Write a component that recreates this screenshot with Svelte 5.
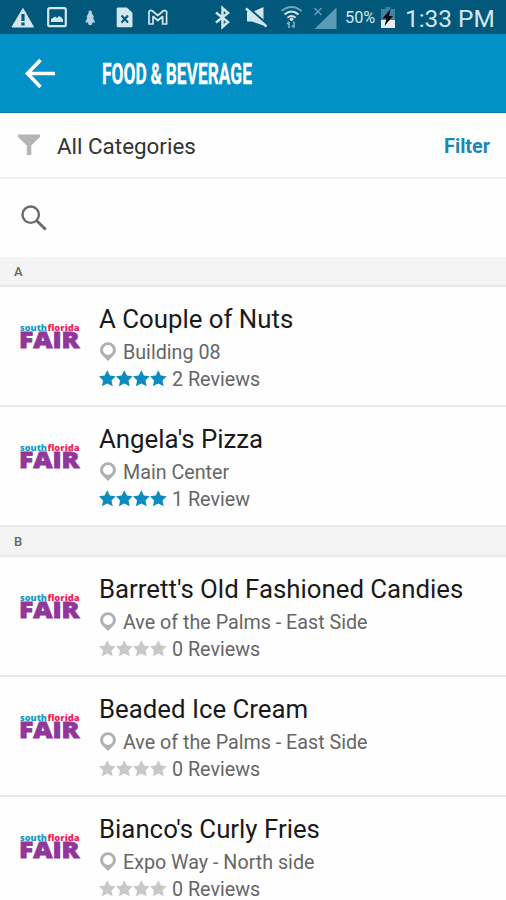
<script lang="ts">
	interface Vendor {
		name: string;
		location: string;
		stars: number;
		reviews: string;
	}

	interface Section {
		letter: string;
		vendors: Vendor[];
	}

	const sections: Section[] = [
		{
			letter: 'A',
			vendors: [
				{ name: 'A Couple of Nuts', location: 'Building 08', stars: 4, reviews: '2 Reviews' },
				{ name: "Angela's Pizza", location: 'Main Center', stars: 4, reviews: '1 Review' }
			]
		},
		{
			letter: 'B',
			vendors: [
				{
					name: "Barrett's Old Fashioned Candies",
					location: 'Ave of the Palms - East Side',
					stars: 0,
					reviews: '0 Reviews'
				},
				{
					name: 'Beaded Ice Cream',
					location: 'Ave of the Palms - East Side',
					stars: 0,
					reviews: '0 Reviews'
				},
				{
					name: "Bianco's Curly Fries",
					location: 'Expo Way - North side',
					stars: 0,
					reviews: '0 Reviews'
				}
			]
		}
	];
</script>

<div class="screen">
	<div class="status-bar">
		<svg width="338" height="34" viewBox="0 0 338 34" aria-hidden="true">
			<!-- warning -->
			<path class="ink" d="M23 8.5 33.5 27h-21.5z" stroke="#d3e6ee" stroke-width="1" stroke-linejoin="round" />
			<path d="M21.4 14h3.2v7h-3.2zM21.4 22.5h3.2v3h-3.2z" fill="#02587b" />
			<!-- screenshot -->
			<rect class="line" x="48.2" y="8.2" width="17.6" height="18" rx="1.5" stroke-width="2.2" />
			<path class="ink" d="M51 22v-3l2.5-1.5 1.5-1 2 1.5 2-2 2.5 1.5 1.5 2V22z" />
			<!-- notification figure -->
			<path class="ink" d="M90.200 10.500c1.500 0 2 1.300 1.600 2.800l2 3.200-.6 1.500 2 4.500h-2.700l-.8 2.500h-3l-.8-2.500h-2.700l2-4.500-.6-1.500 2-3.200c-.4-1.500.1-2.800 1.600-2.800z" opacity=".85" />
			<!-- rejected file -->
			<path class="ink" d="M118 7.500h9l5.500 5.500v13q0 1.300-1.300 1.300H118q-1.300 0-1.300-1.300V8.800q0-1.300 1.300-1.300z" />
			<path d="m121.500 15.500 6.500 7m0-7-6.500 7" stroke="#02587b" stroke-width="2" />
			<!-- mail -->
			<path class="line" d="M149 24V11.500q1.500-2 3.500-.5l5.300 4.500 5.300-4.500q2-1.500 3.500.5V24h-4v-7.500l-4.800 4-4.800-4V24z" stroke-width="1.700" stroke-linejoin="round" />
			<!-- bluetooth -->
			<path class="line" d="m216 12.500 12 9.500-5.500 5V8l5.500 5-12 9.500" stroke-width="2.500" />
			<!-- muted -->
			<path class="ink" d="M247 12h5.500L263.500 7v18.500L252 21.500h-5z" />
			<path d="m247.500 7.500 21 18.500" stroke="#02587b" stroke-width="3" />
			<path class="line" d="m246 8.500 20.500 18" stroke-width="2.600" />
			<!-- wifi -->
			<g class="line" stroke-width="2">
				<path d="M281.500 11q10-8 20 0" opacity=".55" />
				<path d="M284.500 14.500q7-6 14 0" />
				<path d="M287.500 17.800q4-3.500 8 0" />
			</g>
			<circle class="ink" cx="291.500" cy="19.300" r="1.800" />
			<path class="line" d="M289 28v-6m-2 2 2-2.200M294 21.500v6m-2-2 2 2.200" stroke-width="1.700" opacity=".6" />
			<!-- mobile signal -->
			<path d="M336.500 7.500v21.500H314.500z" fill="#5b9bb4" />
			<path d="m314.500 8 7 7m0-7-7 7" stroke="#5b9bb4" stroke-width="1.700" />
		</svg>
		<span class="percent">50%</span>
		<svg class="battery" width="16" height="34" viewBox="0 0 16 34" aria-hidden="true">
			<path d="M5.500 7h5v2H15v19H1V9h4.500z" fill="#3d849f" />
			<path d="M1 20h14v8H1z" fill="#e6f0f3" />
			<path d="m10.500 9-8 9.500h4L4.500 26l8.500-10H9z" fill="#06090b" />
		</svg>
		<span class="clock">1:33 PM</span>
	</div>

	<header>
		<svg class="back" width="32" height="32" viewBox="0 0 32 32" role="img" aria-label="Back">
			<path d="M16.500 3 3.500 16.500l13 13.500M3.500 16.500H31" fill="none" stroke="#fff" stroke-width="3.600" />
		</svg>
		<svg class="title" width="160" height="44" viewBox="0 0 160 44">
			<text x="0" y="33" textLength="150" lengthAdjust="spacingAndGlyphs">FOOD &amp; BEVERAGE</text>
		</svg>
	</header>

	<div class="filter-row">
		<svg width="22" height="22" viewBox="0 0 22 22" aria-hidden="true">
			<path d="M0 .5h22V3L13.300 11.500v9.500H8.800v-9.500L0 3z" fill="#b5b5b5" />
		</svg>
		<span class="categories">All Categories</span>
		<span class="filter">Filter</span>
	</div>

	<div class="search">
		<svg width="26" height="26" viewBox="0 0 26 26" aria-hidden="true">
			<circle cx="9.700" cy="9.700" r="8.200" fill="none" stroke="#6b6b6b" stroke-width="2.400" />
			<path d="m15.700 15.700 9 8.800" stroke="#6b6b6b" stroke-width="3" />
		</svg>
	</div>

	{#each sections as section}
		<div class="section-head">{section.letter}</div>
		{#each section.vendors as vendor}
			<div class="vendor">
				<svg class="logo" width="62" height="44" viewBox="0 0 62 44">
					<text class="south" x="0" y="14.500" textLength="27" lengthAdjust="spacingAndGlyphs">south</text>
					<text class="florida" x="27.500" y="14.500" textLength="32" lengthAdjust="spacingAndGlyphs">florida</text>
					<text class="fair" x="-1" y="32" textLength="60.500" lengthAdjust="spacingAndGlyphs">FAIR</text>
				</svg>
				<div class="info">
					<div class="name">{vendor.name}</div>
					<div class="location">
						<svg width="18" height="20" viewBox="0 0 18 20" aria-hidden="true">
							<path
								fill-rule="evenodd"
								d="M9 .2a8 8 0 0 1 8 8c0 4-4 6.500-8 10.800-4-4.300-8-6.800-8-10.800a8 8 0 0 1 8-8zm0 2.900a4.900 4.900 0 1 0 0 9.800 4.900 4.900 0 0 0 0-9.800z"
								fill="#b1b1b1"
							/>
						</svg>
						<span>{vendor.location}</span>
					</div>
					<div class="rating">
						<svg width="68" height="18" viewBox="0 0 68 18" aria-hidden="true">
							{#each [0, 1, 2, 3] as i}
								<path
									class="star"
									class:on={i < vendor.stars}
									transform="translate({i * 17} 0)"
									d="M8.300.2 10.900 5.600 16.600 6.300 12.500 10.500 13.700 16.300 8.300 13.600 2.900 16.300 4.100 10.500 0 6.300 5.700 5.600z"
								/>
							{/each}
						</svg>
						<span>{vendor.reviews}</span>
					</div>
				</div>
			</div>
		{/each}
	{/each}
</div>

<style>
	:global(body) {
		background: #fff;
		overflow: hidden;
	}

	.screen {
		width: 506px;
		height: 900px;
		overflow: hidden;
		background: #fefefe;
		font-family: Roboto, sans-serif;
	}

	/* Status bar */
	.status-bar {
		display: flex;
		align-items: center;
		height: 34px;
		background: #02587b;
		color: #d3e6ee;
		white-space: nowrap;
	}

	.ink {
		fill: #d3e6ee;
	}

	.line {
		fill: none;
		stroke: #d3e6ee;
	}

	.percent {
		width: 34px;
		margin-left: 7px;
		font-size: 16.3px;
		line-height: 34px;
		padding-top: 2px;
	}

	.battery {
		margin-left: 1px;
	}

	.clock {
		margin-left: 9px;
		font-size: 24.4px;
		line-height: 34px;
		padding-top: 3px;
	}

	/* App bar */
	header {
		display: flex;
		align-items: center;
		height: 79px;
		box-sizing: border-box;
		border-bottom: 1px solid #0580af;
		background: #0291c6;
	}

	.back {
		margin-left: 24px;
	}

	.title {
		margin-left: 46px;
	}

	.title text {
		font-size: 29.5px;
		font-weight: 700;
		word-spacing: -1px;
		fill: #fff;
		stroke: #fff;
		stroke-width: 0.3;
	}

	.filter-row {
		display: flex;
		align-items: center;
		height: 66px;
		box-sizing: border-box;
		padding: 0 16px 0 18px;
		border-bottom: 2px solid #f2f2f2;
	}

	.categories {
		flex: 1;
		margin-left: 17px;
		padding-top: 1px;
		font-size: 22.4px;
		color: #333;
	}

	.filter {
		padding-top: 2px;
		font-size: 19.8px;
		font-weight: 700;
		color: #1a87b5;
	}

	.search {
		display: flex;
		align-items: center;
		height: 78px;
		padding-left: 21px;
	}

	/* List */
	.section-head {
		height: 30px;
		box-sizing: border-box;
		padding-left: 14px;
		border-bottom: 2px solid #e9e9e9;
		background: #f4f4f4;
		font-size: 13px;
		font-weight: 500;
		line-height: 29px;
		color: #666;
	}

	.vendor {
		display: flex;
		height: 120px;
		box-sizing: border-box;
		padding: 15px 0 0 20px;
		border-bottom: 2px solid #e9e9e9;
	}

	.logo {
		margin-top: 14px;
	}

	.logo text {
		font-family: 'Open Sans', sans-serif;
		font-weight: 800;
	}

	.logo .south {
		font-size: 9.5px;
		fill: #1a9ac5;
	}

	.logo .florida {
		font-size: 9.5px;
		fill: #f01e5a;
	}

	.logo .fair {
		font-size: 22.5px;
		fill: #91379b;
		stroke: #91379b;
		stroke-width: 0.8;
	}

	.info {
		margin-left: 17px;
		white-space: nowrap;
	}

	.name {
		height: 36px;
		font-size: 25.8px;
		line-height: 34px;
		color: #1a1a1a;
	}

	.location,
	.rating {
		display: flex;
		align-items: center;
		height: 27px;
		font-size: 19.7px;
		color: #666;
	}

	.location span {
		margin-left: 6px;
		padding-top: 2px;
	}

	.rating span {
		margin-left: 5px;
		padding-top: 2px;
	}

	.star {
		fill: #c8c8c8;
	}

	.star.on {
		fill: #0d8dbf;
	}
</style>
